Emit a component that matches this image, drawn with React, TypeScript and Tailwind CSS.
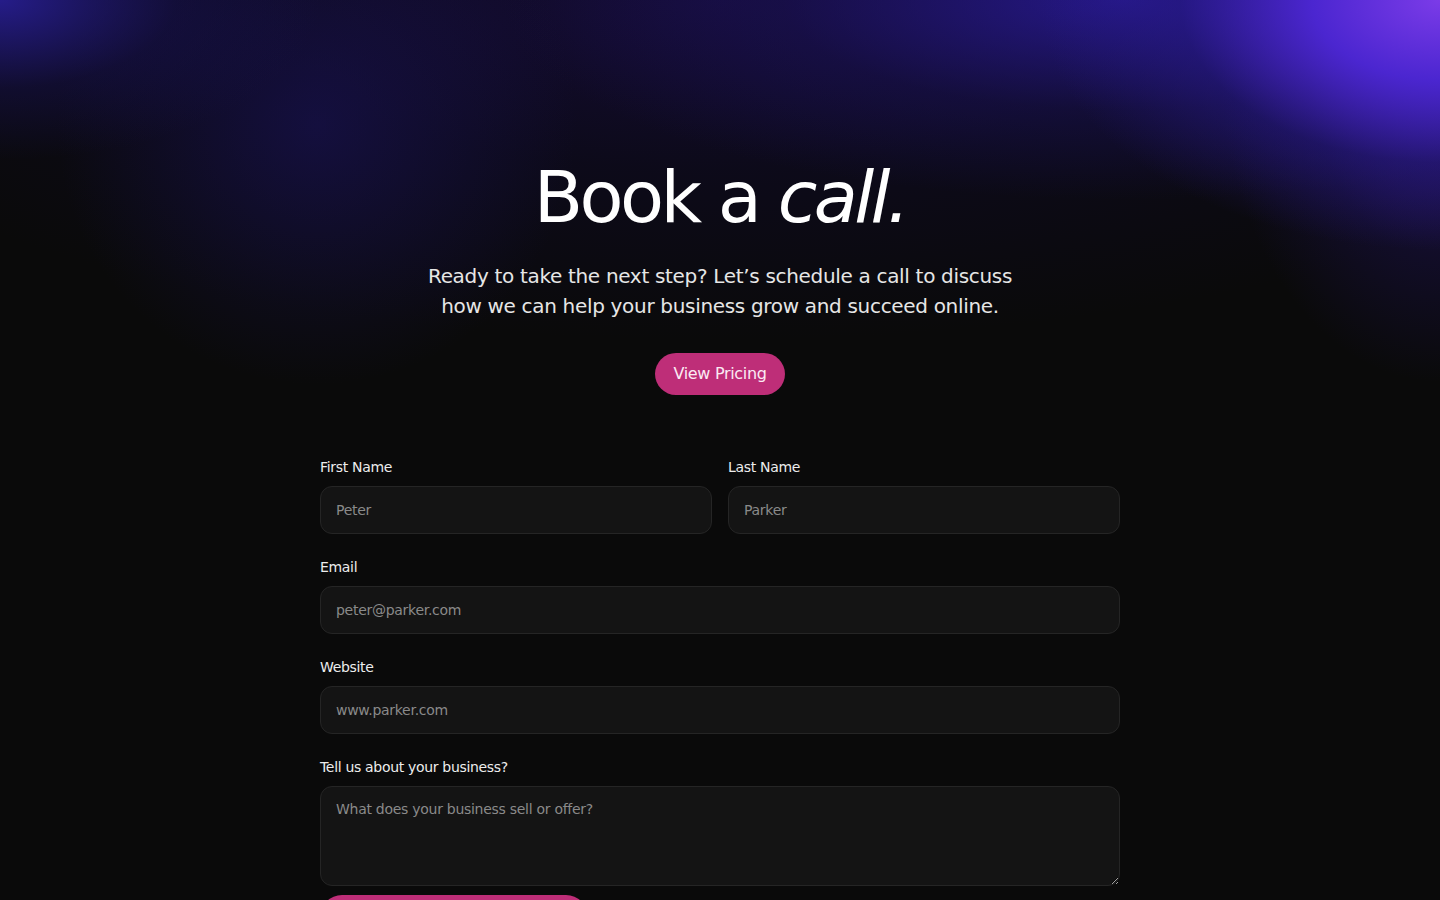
import React from "react";

function Field({ label, placeholder, type = "text" }: { label: string; placeholder: string; type?: string }) {
  return (
    <div className="flex flex-col">
      <label className="mb-2 text-sm leading-[21px] text-[#ededed]">{label}</label>
      <input
        type={type}
        placeholder={placeholder}
        className="h-12 w-full rounded-xl border border-[#252525] bg-[#141414] px-[15px] text-sm tracking-[-0.02em] text-white outline-none placeholder:text-[#8a8a8a]"
      />
    </div>
  );
}

export default function App() {
  return (
    <div className="relative min-h-screen w-full overflow-hidden bg-[#0a0a0a] font-['DejaVu_Sans',sans-serif] tracking-[-0.02em]">
      <div className="pointer-events-none absolute inset-x-0 top-0 h-[520px] bg-[radial-gradient(ellipse_400px_250px_at_100%_0%,#7b3be8_0%,#4b26d0_32%,rgba(40,25,140,0.5)_65%,transparent_100%),radial-gradient(ellipse_220px_320px_at_100%_12%,rgba(70,34,200,0.55)_0%,rgba(40,22,130,0.25)_60%,transparent_100%),radial-gradient(ellipse_620px_200px_at_78%_0%,rgba(45,28,170,0.75)_0%,rgba(30,20,110,0.35)_55%,transparent_100%),radial-gradient(ellipse_320px_160px_at_0%_0%,rgba(40,30,150,0.9)_0%,rgba(25,18,90,0.4)_55%,transparent_100%),radial-gradient(ellipse_260px_260px_at_22%_24%,rgba(28,20,100,0.5)_0%,transparent_100%),radial-gradient(ellipse_1000px_340px_at_50%_0%,rgba(22,12,58,0.9)_0%,rgba(14,10,36,0.6)_50%,transparent_100%)]" />
      <div className="relative flex flex-col items-center pt-[161px]">
        <h1 className="text-[72px] font-normal leading-none tracking-[-0.05em] text-white">
          Book a <span className="italic">call.</span>
        </h1>
        <p className="mt-7 text-center text-xl leading-[30px] text-[#e6e6e6]">
          Ready to take the next step? Let’s schedule a call to discuss
          <br />
          how we can help your business grow and succeed online.
        </p>
        <button className="mt-8 rounded-full bg-[#be2e78] px-[18px] py-[9px] text-base leading-6 text-[#fbeaf3]">
          View Pricing
        </button>

        <form className="mt-[62px] flex w-[800px] flex-col gap-[23px] pb-16">
          <div className="grid grid-cols-2 gap-4">
            <Field label="First Name" placeholder="Peter" />
            <Field label="Last Name" placeholder="Parker" />
          </div>
          <Field label="Email" placeholder="peter@parker.com" type="email" />
          <Field label="Website" placeholder="www.parker.com" />
          <div className="flex flex-col">
            <label className="mb-2 text-sm leading-[21px] text-[#ededed]">Tell us about your business?</label>
            <textarea
              placeholder="What does your business sell or offer?"
              className="block h-[100px] w-full rounded-xl border border-[#252525] bg-[#141414] px-[15px] py-3 text-sm leading-5 tracking-[-0.02em] text-white outline-none placeholder:text-[#8a8a8a]"
            />
            <button
              type="button"
              className="mt-[9px] h-[44px] w-[268px] rounded-full bg-[#be2e78] text-base text-[#fbeaf3]"
            >
              Book a Call
            </button>
          </div>
        </form>
      </div>
    </div>
  );
}
